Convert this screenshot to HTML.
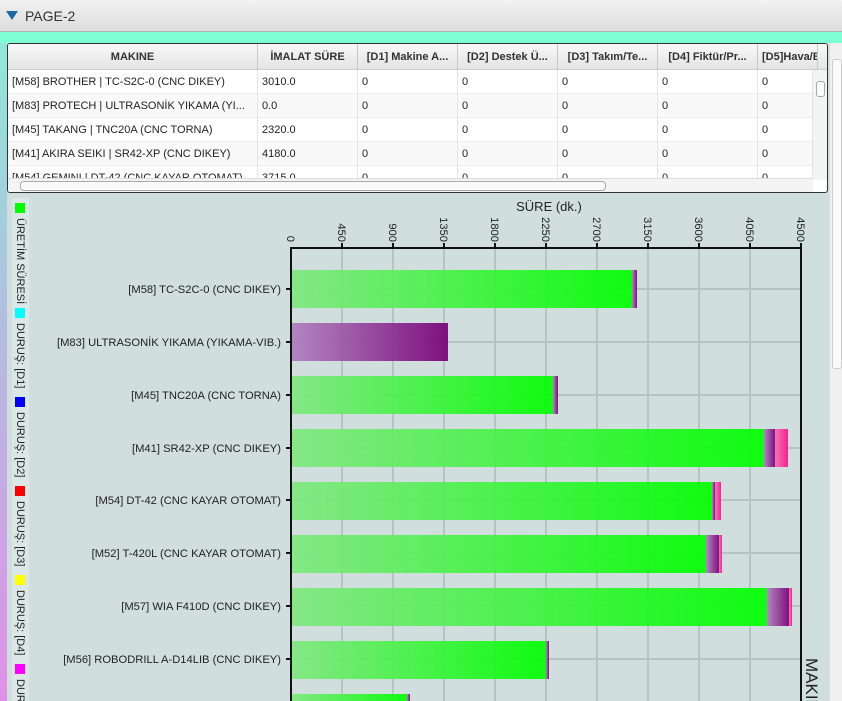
<!DOCTYPE html>
<html style="overflow:hidden;width:842px;height:701px"><head><meta charset="utf-8"><style>
*{margin:0;padding:0;box-sizing:border-box}
body{width:842px;height:701px;overflow:hidden;background:#d0dede;font-family:"Liberation Sans","DejaVu Sans",sans-serif;position:relative}
.title{position:absolute;left:0;top:0;width:842px;height:32px;background:linear-gradient(#f2f2f2,#dcdcdc);border-bottom:1px solid #b0b0b0;font-size:14px;color:#333}
.title span{position:absolute;left:25px;top:8px}
.tri{position:absolute;left:6px;top:11px;width:0;height:0;border-left:6px solid transparent;border-right:6px solid transparent;border-top:9px solid #1a6aa0}
.band{position:absolute;left:0;top:32px;width:842px;height:11px;background:#7fffd4}
.lstrip{position:absolute;left:0;top:43px;width:7px;height:658px;background:linear-gradient(#90e8d8,#b0c0e0 40%,#e090e8)}
.tbl{position:absolute;left:7px;top:43px;width:821px;height:150px;border:1px solid #333;border-radius:3px;background:#fff;overflow:hidden;font-size:11px;color:#222}
.hdr{position:absolute;left:0;top:0;height:26px;width:821px;background:linear-gradient(#f8f8f8,#e4e4e4);border-bottom:1px solid #ccc}
.c{position:absolute;height:24px;line-height:24px;padding-left:4px;white-space:nowrap;overflow:hidden;border-right:1px solid #e4e4e4}
.hdr .c{height:26px;line-height:26px;font-weight:bold;text-align:center;padding:0;border-right:1px solid #c8c8c8;color:#333}
.row{position:absolute;left:0;width:805px;height:24px;border-bottom:1px solid #eee}
.vs{position:absolute;left:805px;top:26px;width:15px;height:110px;background:#f4f4f4}
.hs{position:absolute;left:0;top:134px;width:805px;height:15px;background:#f4f4f4;border-top:1px solid #ddd}
.leg{position:absolute;left:12px;top:198px;width:17px;height:503px;background:#dbe6e6;overflow:hidden}
.sq{position:absolute;left:3px;width:10px;height:10px}
.lt{position:absolute;left:2px;font-size:11px;color:#222;writing-mode:vertical-rl;white-space:nowrap}
.rsb{position:absolute;left:829px;top:43px;width:13px;height:658px;background:#f0f0f0;border-left:1px solid #ddd}
</style></head><body>
<div class="title"><div class="tri"></div><span>PAGE-2</span></div>
<div class="band"></div>
<div class="lstrip"></div>
<div class="tbl">
 <div class="hdr">
  <div class="c" style="left:0;width:250px">MAKINE</div>
  <div class="c" style="left:250px;width:100px">İMALAT SÜRE</div>
  <div class="c" style="left:350px;width:100px">[D1] Makine A...</div>
  <div class="c" style="left:450px;width:100px">[D2] Destek Ü...</div>
  <div class="c" style="left:550px;width:100px">[D3] Takım/Te...</div>
  <div class="c" style="left:650px;width:100px">[D4] Fiktür/Pr...</div>
  <div class="c" style="left:750px;width:60px;text-align:left;padding-left:4px">[D5]Hava/E</div>
 </div>
 <div class="row" style="top:26px;background:#fff"><div class="c" style="left:0;width:250px">[M58] BROTHER | TC-S2C-0 (CNC DIKEY)</div><div class="c" style="left:250px;width:100px">3010.0</div><div class="c" style="left:350px;width:100px">0</div><div class="c" style="left:450px;width:100px">0</div><div class="c" style="left:550px;width:100px">0</div><div class="c" style="left:650px;width:100px">0</div><div class="c" style="left:750px;width:55px">0</div></div>
 <div class="row" style="top:50px;background:#f9f9f9"><div class="c" style="left:0;width:250px">[M83] PROTECH | ULTRASONİK YIKAMA (YI...</div><div class="c" style="left:250px;width:100px">0.0</div><div class="c" style="left:350px;width:100px">0</div><div class="c" style="left:450px;width:100px">0</div><div class="c" style="left:550px;width:100px">0</div><div class="c" style="left:650px;width:100px">0</div><div class="c" style="left:750px;width:55px">0</div></div>
 <div class="row" style="top:74px;background:#fff"><div class="c" style="left:0;width:250px">[M45] TAKANG | TNC20A (CNC TORNA)</div><div class="c" style="left:250px;width:100px">2320.0</div><div class="c" style="left:350px;width:100px">0</div><div class="c" style="left:450px;width:100px">0</div><div class="c" style="left:550px;width:100px">0</div><div class="c" style="left:650px;width:100px">0</div><div class="c" style="left:750px;width:55px">0</div></div>
 <div class="row" style="top:98px;background:#f9f9f9"><div class="c" style="left:0;width:250px">[M41] AKIRA SEIKI | SR42-XP (CNC DIKEY)</div><div class="c" style="left:250px;width:100px">4180.0</div><div class="c" style="left:350px;width:100px">0</div><div class="c" style="left:450px;width:100px">0</div><div class="c" style="left:550px;width:100px">0</div><div class="c" style="left:650px;width:100px">0</div><div class="c" style="left:750px;width:55px">0</div></div>
 <div class="row" style="top:122px;background:#fff"><div class="c" style="left:0;width:250px">[M54] GEMINI | DT-42 (CNC KAYAR OTOMAT)</div><div class="c" style="left:250px;width:100px">3715.0</div><div class="c" style="left:350px;width:100px">0</div><div class="c" style="left:450px;width:100px">0</div><div class="c" style="left:550px;width:100px">0</div><div class="c" style="left:650px;width:100px">0</div><div class="c" style="left:750px;width:55px">0</div></div>
 <div class="vs"><div style="position:absolute;left:3px;top:11px;width:9px;height:16px;border:1px solid #aaa;border-radius:3px;background:#fff"></div></div>
 <div class="hs"><div style="position:absolute;left:12px;top:2px;width:586px;height:10px;border:1px solid #aaa;border-radius:4px;background:#fafafa"></div></div>
</div>
<div class="leg">
 <div class="sq" style="top:5px;background:#00ff00"></div><div class="lt" style="top:20px">ÜRETİM SÜRESİ</div>
 <div class="sq" style="top:110px;background:#00ffff"></div><div class="lt" style="top:125px">DURUŞ: [D1]</div>
 <div class="sq" style="top:199px;background:#0000ff"></div><div class="lt" style="top:214px">DURUŞ: [D2]</div>
 <div class="sq" style="top:288px;background:#ff0000"></div><div class="lt" style="top:303px">DURUŞ: [D3]</div>
 <div class="sq" style="top:377px;background:#ffff00"></div><div class="lt" style="top:392px">DURUŞ: [D4]</div>
 <div class="sq" style="top:466px;background:#ff00ff"></div><div class="lt" style="top:481px">DURUŞ</div>
</div>
<svg style="position:absolute;left:0;top:0" width="842" height="701" font-family="Liberation Sans, DejaVu Sans, sans-serif">
<defs>
<linearGradient id="g" x1="0" x2="1"><stop offset="0" stop-color="#80e880"/><stop offset="1" stop-color="#00ff00"/></linearGradient>
<linearGradient id="p" x1="0" x2="1"><stop offset="0" stop-color="#b080c0"/><stop offset="1" stop-color="#780078"/></linearGradient>
<linearGradient id="k" x1="0" x2="1"><stop offset="0" stop-color="#f070b0"/><stop offset="1" stop-color="#ff1090"/></linearGradient>
</defs>
<g stroke="#b8c4c4" stroke-width="2">
<line x1="342" y1="249" x2="342" y2="701"/><line x1="393" y1="249" x2="393" y2="701"/><line x1="444" y1="249" x2="444" y2="701"/><line x1="495" y1="249" x2="495" y2="701"/><line x1="546" y1="249" x2="546" y2="701"/><line x1="597" y1="249" x2="597" y2="701"/><line x1="648" y1="249" x2="648" y2="701"/><line x1="699" y1="249" x2="699" y2="701"/><line x1="750" y1="249" x2="750" y2="701"/>
<line x1="291" y1="289" x2="801" y2="289"/><line x1="291" y1="342" x2="801" y2="342"/><line x1="291" y1="395" x2="801" y2="395"/><line x1="291" y1="448" x2="801" y2="448"/><line x1="291" y1="500" x2="801" y2="500"/><line x1="291" y1="553" x2="801" y2="553"/><line x1="291" y1="606" x2="801" y2="606"/><line x1="291" y1="659" x2="801" y2="659"/>
</g>
<g opacity="0.92">
<rect x="291" y="270" width="341" height="38" fill="url(#g)"/><rect x="632" y="270" width="5" height="38" fill="url(#p)"/>
<rect x="291" y="323" width="157" height="38" fill="url(#p)"/>
<rect x="291" y="376" width="262" height="38" fill="url(#g)"/><rect x="553" y="376" width="5" height="38" fill="url(#p)"/>
<rect x="291" y="429" width="473" height="38" fill="url(#g)"/><rect x="764" y="429" width="11" height="38" fill="url(#p)"/><rect x="775" y="429" width="13" height="38" fill="url(#k)"/>
<rect x="291" y="482" width="421" height="38" fill="url(#g)"/><rect x="712" y="482" width="3" height="38" fill="url(#p)"/><rect x="715" y="482" width="6" height="38" fill="url(#k)"/>
<rect x="291" y="535" width="415" height="38" fill="url(#g)"/><rect x="706" y="535" width="13" height="38" fill="url(#p)"/><rect x="719" y="535" width="3" height="38" fill="url(#k)"/>
<rect x="291" y="588" width="476" height="38" fill="url(#g)"/><rect x="767" y="588" width="22" height="38" fill="url(#p)"/><rect x="789" y="588" width="3" height="38" fill="url(#k)"/>
<rect x="291" y="641" width="255" height="38" fill="url(#g)"/><rect x="546" y="641" width="3" height="38" fill="url(#p)"/>
<rect x="291" y="694" width="116" height="10" fill="url(#g)"/><rect x="407" y="694" width="3" height="10" fill="url(#p)"/>
</g>
<g stroke="#111" stroke-width="2" fill="none">
<line x1="290" y1="248" x2="802" y2="248"/><line x1="291" y1="248" x2="291" y2="701"/><line x1="801" y1="248" x2="801" y2="701"/>
</g>
<g stroke="#111" stroke-width="2">
<line x1="342" y1="243" x2="342" y2="248"/><line x1="393" y1="243" x2="393" y2="248"/><line x1="444" y1="243" x2="444" y2="248"/><line x1="495" y1="243" x2="495" y2="248"/><line x1="546" y1="243" x2="546" y2="248"/><line x1="597" y1="243" x2="597" y2="248"/><line x1="648" y1="243" x2="648" y2="248"/><line x1="699" y1="243" x2="699" y2="248"/><line x1="750" y1="243" x2="750" y2="248"/><line x1="801" y1="243" x2="801" y2="248"/>
<line x1="286" y1="289" x2="291" y2="289"/><line x1="286" y1="342" x2="291" y2="342"/><line x1="286" y1="395" x2="291" y2="395"/><line x1="286" y1="448" x2="291" y2="448"/><line x1="286" y1="500" x2="291" y2="500"/><line x1="286" y1="553" x2="291" y2="553"/><line x1="286" y1="606" x2="291" y2="606"/><line x1="286" y1="659" x2="291" y2="659"/>
</g>
<g font-size="11.2" fill="#222">
<text x="549" y="211" text-anchor="middle" font-size="13">SÜRE (dk.)</text>
<g text-anchor="end">
<text transform="translate(287,242) rotate(90)" x="0" y="0">0</text>
<text transform="translate(338,242) rotate(90)">450</text>
<text transform="translate(389,242) rotate(90)">900</text>
<text transform="translate(440,242) rotate(90)">1350</text>
<text transform="translate(491,242) rotate(90)">1800</text>
<text transform="translate(542,242) rotate(90)">2250</text>
<text transform="translate(593,242) rotate(90)">2700</text>
<text transform="translate(644,242) rotate(90)">3150</text>
<text transform="translate(695,242) rotate(90)">3600</text>
<text transform="translate(746,242) rotate(90)">4050</text>
<text transform="translate(797,242) rotate(90)">4500</text>
<text x="281" y="293">[M58] TC-S2C-0 (CNC DIKEY)</text>
<text x="281" y="346">[M83] ULTRASONİK YIKAMA (YIKAMA-VIB.)</text>
<text x="281" y="399">[M45] TNC20A (CNC TORNA)</text>
<text x="281" y="452">[M41] SR42-XP (CNC DIKEY)</text>
<text x="281" y="504">[M54] DT-42 (CNC KAYAR OTOMAT)</text>
<text x="281" y="557">[M52] T-420L (CNC KAYAR OTOMAT)</text>
<text x="281" y="610">[M57] WIA F410D (CNC DIKEY)</text>
<text x="281" y="663">[M56] ROBODRILL A-D14LIB (CNC DIKEY)</text>
</g>
<text transform="translate(806,658) rotate(90)" font-size="17">MAKINE</text>
</g>
</svg>
<div class="rsb"><div style="position:absolute;left:2px;top:16px;width:10px;height:310px;border:1px solid #ccc;border-radius:3px;background:#fafafa"></div></div>
</body></html>
